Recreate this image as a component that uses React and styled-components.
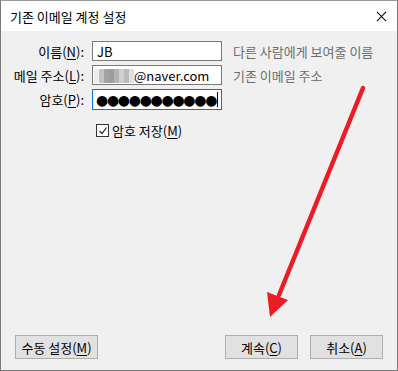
import styled, { createGlobalStyle } from "styled-components";

const GlobalStyle = createGlobalStyle`
  html, body {
    margin: 0;
    padding: 0;
    background: #ffffff;
  }
  body {
    font-family: "Noto Sans CJK KR", "Noto Sans", sans-serif;
    font-size: 13px;
  }
`;

const Key = ({ children }) => <U>{children}</U>;

const blurShades = ["#ececec", "#c4c4c4", "#a2a2a2", "#9c9c9c", "#b4b4b4", "#cfcfcf", "#bcbcbc", "#e0e0e0"];

const App = () => {
  return (
    <>
      <GlobalStyle />
      <Window>
        <TitleBar>
          <Title>기존 이메일 계정 설정</Title>
          <CloseIcon viewBox="0 0 12 12">
            <path d="M1 1 L11 11 M11 1 L1 11" stroke="#000" strokeWidth="1.1" />
          </CloseIcon>
        </TitleBar>

        <Content>
          <Form>
            <Label>
              이름(<Key>N</Key>):
            </Label>
            <Input>JB</Input>
            <Hint>다른 사람에게 보여줄 이름</Hint>

            <Label>
              메일 주소(<Key>L</Key>):
            </Label>
            <Input>
              <Blur>
                {blurShades.map((c, i) => (
                  <span key={i} style={{ background: c }} />
                ))}
              </Blur>
              @naver.com
            </Input>
            <Hint>기존 이메일 주소</Hint>

            <Label>
              암호(<Key>P</Key>):
            </Label>
            <Input focused>
              <Dots>●●●●●●●●●●●</Dots>
              <Caret />
            </Input>
            <span />

            <span />
            <CheckRow>
              <CheckBox>
                <svg width="10" height="10" viewBox="0 0 10 10">
                  <path d="M1.5 5 L4 7.5 L8.5 1.5" fill="none" stroke="#222" strokeWidth="1.2" />
                </svg>
              </CheckBox>
              <span>
                암호 저장(<Key>M</Key>)
              </span>
            </CheckRow>
          </Form>

          <ButtonBar>
            <Button wide>
              <span>
                수동 설정(<Key>M</Key>)
              </span>
            </Button>
            <Spacer />
            <Button>
              <span>
                계속(<Key>C</Key>)
              </span>
            </Button>
            <Button>
              <span>
                취소(<Key>A</Key>)
              </span>
            </Button>
          </ButtonBar>
        </Content>

        <Arrow width="398" height="371" viewBox="0 0 398 371">
          <line x1="363" y1="88" x2="279" y2="295" stroke="#ed1c24" strokeWidth="4.5" strokeLinecap="round" />
          <polygon points="270,317 267,292 288,300" fill="#ed1c24" />
        </Arrow>
      </Window>
    </>
  );
};

export default App;

const Window = styled.div`
  position: relative;
  width: 398px;
  height: 371px;
  box-sizing: border-box;
  border: 1px solid #7a7a7a;
  border-top-color: #9a9a9a;
  display: flex;
  flex-direction: column;
  background: #f0f0f0;
`;

const TitleBar = styled.div`
  height: 30px;
  background: #ffffff;
  display: flex;
  align-items: center;
  justify-content: space-between;
  padding: 0 10px 0 9px;
`;

const Title = styled.span`
  font-size: 13px;
  color: #000;
`;

const CloseIcon = styled.svg`
  width: 11px;
  height: 11px;
`;

const Content = styled.div`
  flex: 1;
  display: flex;
  flex-direction: column;
  justify-content: space-between;
  padding: 10px 14px 11px 0;
`;

const Form = styled.div`
  display: grid;
  grid-template-columns: 83px 130px auto;
  column-gap: 8px;
  row-gap: 4px;
  align-items: center;
`;

const Label = styled.span`
  text-align: right;
  color: #000;
  white-space: nowrap;
`;

const U = styled.span`
  text-decoration: underline;
  text-underline-offset: 2px;
`;

const Input = styled.div`
  position: relative;
  height: ${(p) => (p.focused ? "21px" : "20px")};
  box-sizing: border-box;
  border: 1px solid ${(p) => (p.focused ? "#0078d7" : "#7a7a7a")};
  background: #fff;
  display: flex;
  align-items: center;
  padding-left: ${(p) => (p.focused ? "3px" : "4px")};
  color: #000;
  font-size: 13px;
  overflow: hidden;
`;

const Hint = styled.span`
  margin-left: 3px;
  color: #6d6d6d;
  white-space: nowrap;
`;

const Blur = styled.span`
  display: flex;
  height: 14px;
  margin-left: -3px;
  margin-top: 2px;
  span {
    width: 5px;
    height: 100%;
  }
`;

const Dots = styled.span`
  font-family: "DejaVu Sans", sans-serif;
  font-size: 14px;
  letter-spacing: -1.3px;
  line-height: 1;
`;

const Caret = styled.span`
  width: 1px;
  height: 15px;
  background: #000;
  margin-left: 1px;
`;

const CheckRow = styled.label`
  display: flex;
  align-items: center;
  gap: 3px;
  margin-top: 7px;
  margin-left: 4px;
  color: #000;
`;

const CheckBox = styled.span`
  width: 13px;
  height: 13px;
  box-sizing: border-box;
  border: 1px solid #333;
  background: #fff;
  display: flex;
  align-items: center;
  justify-content: center;
`;

const ButtonBar = styled.div`
  display: flex;
  gap: 12px;
  padding-left: 14px;
`;

const Spacer = styled.div`
  flex: 1;
`;

const Button = styled.div`
  width: ${(p) => (p.wide ? "83px" : "73px")};
  height: 24px;
  box-sizing: border-box;
  border: 1px solid #adadad;
  background: #e1e1e1;
  display: flex;
  align-items: center;
  justify-content: center;
  color: #000;
  white-space: nowrap;
`;

const Arrow = styled.svg`
  position: absolute;
  left: -1px;
  top: -1px;
  pointer-events: none;
`;
